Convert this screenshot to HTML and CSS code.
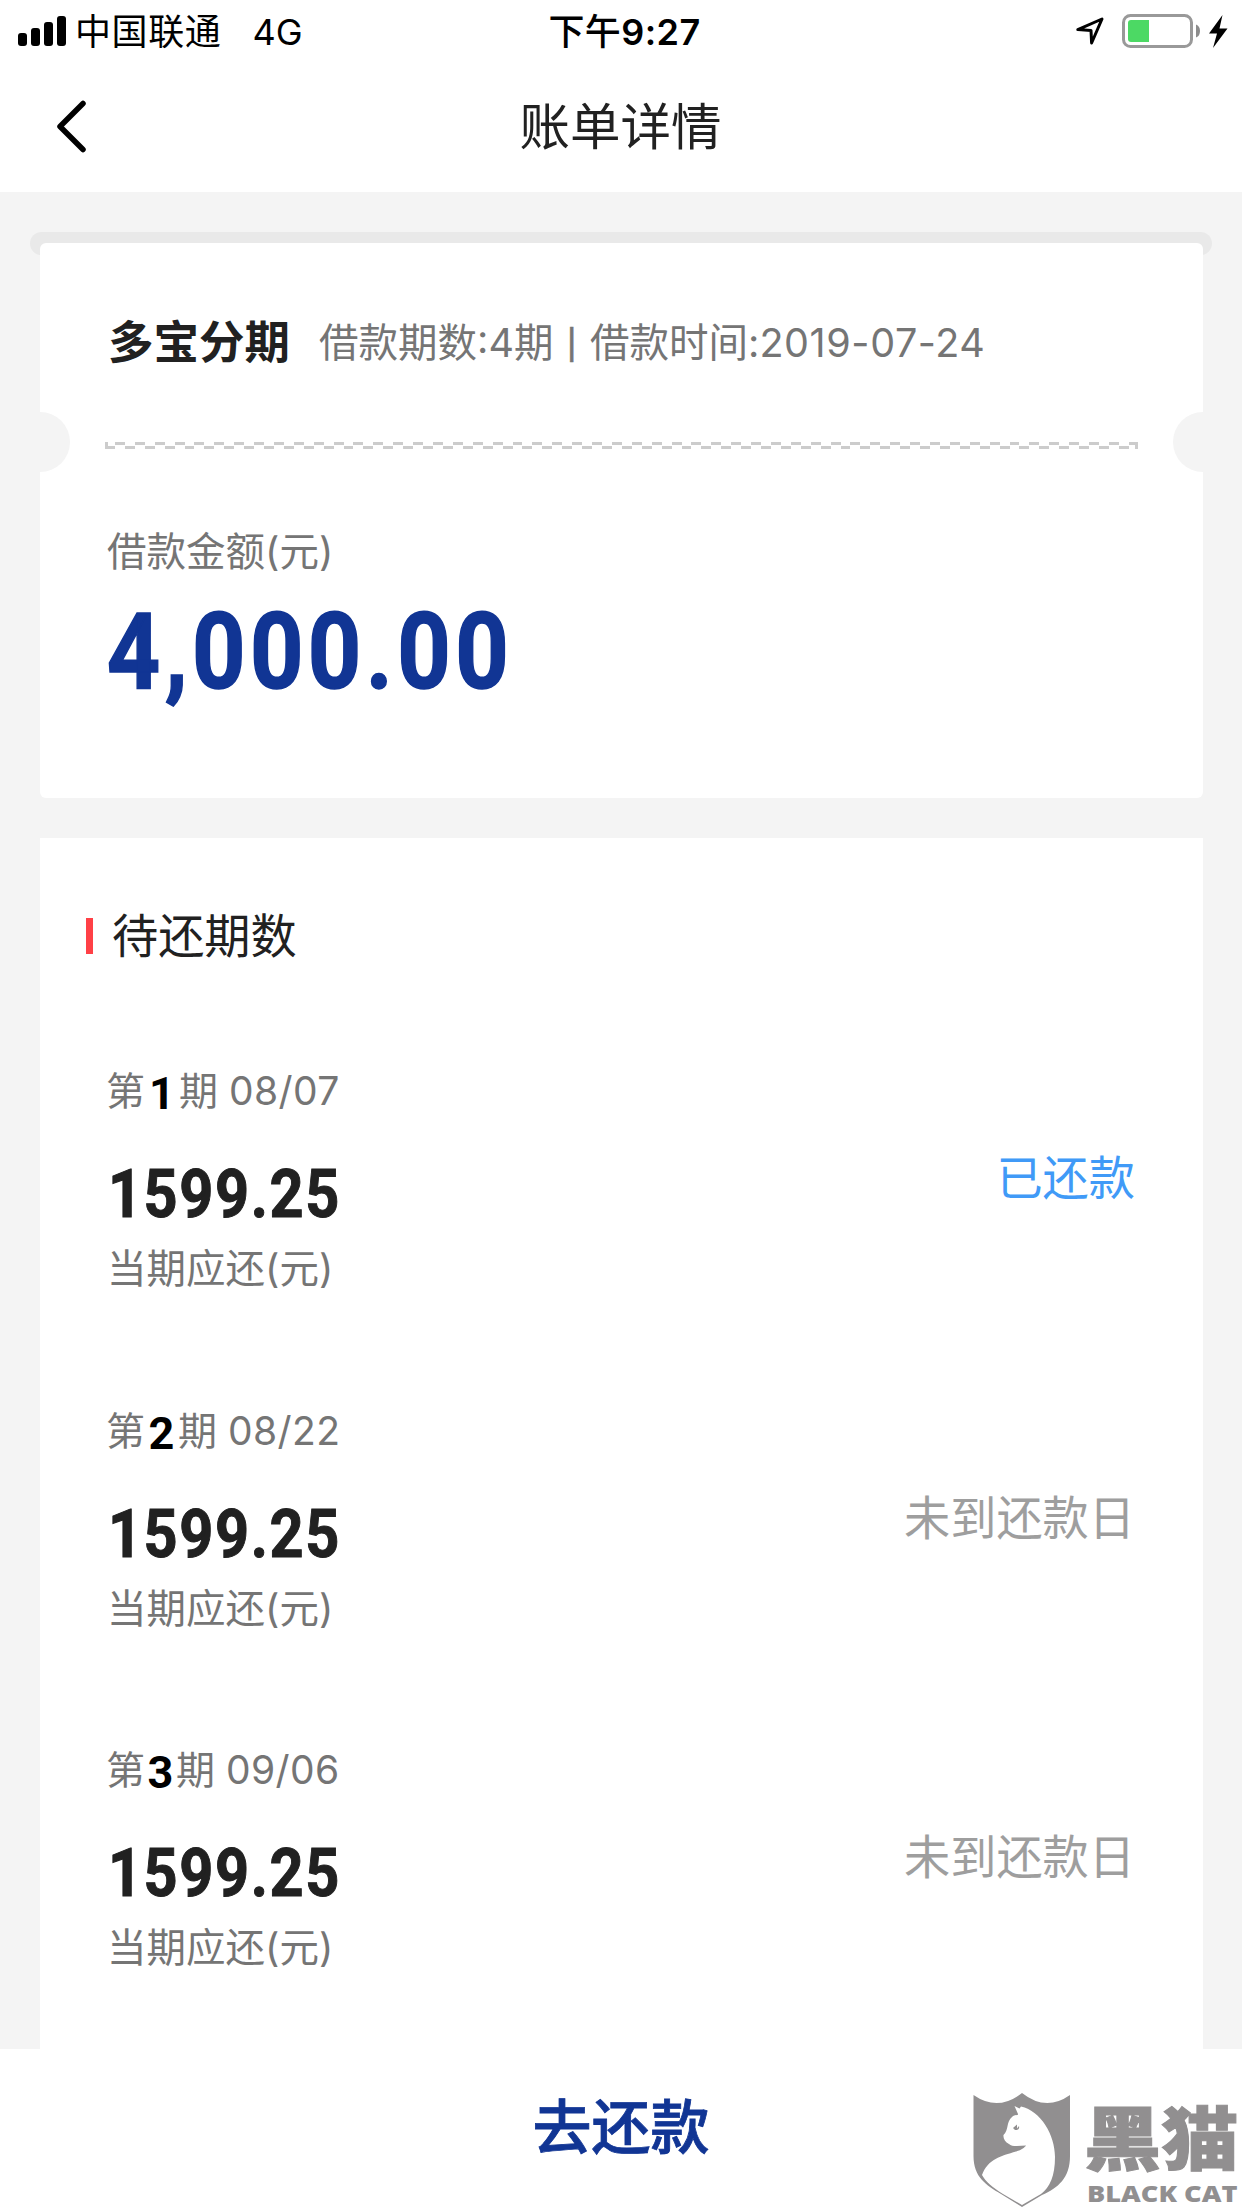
FILE: index.html
```
<!DOCTYPE html>
<html lang="zh-CN">
<head>
    <meta charset="UTF-8">
    <meta name="viewport" content="width=device-width, initial-scale=1.0">
    <title>账单详情</title>
    <link rel="stylesheet" href="styles.css">
</head>
<body>
    <div class="status-bar">
        <div class="status-left">
            <svg class="signal" width="48" height="30" viewBox="0 0 48 30">
                <rect x="0" y="17" width="9" height="13" rx="3"/>
                <rect x="13" y="12" width="9" height="18" rx="3"/>
                <rect x="26" y="6" width="9" height="24" rx="3"/>
                <rect x="39" y="0" width="9" height="30" rx="3"/>
            </svg>
            <span class="carrier">中国联通</span>
            <span class="network">4G</span>
        </div>
        <div class="clock">下午<span class="clock-num">9:27</span></div>
        <div class="status-right">
            <svg class="location" width="28" height="28" viewBox="0 0 28 28">
                <path d="M1.8 12.6 L26 2 L15.6 26 L15 13.4 Z" fill="none" stroke="#000" stroke-width="3" stroke-linejoin="round"/>
            </svg>
            <svg class="battery" width="79" height="34" viewBox="0 0 79 34">
                <rect x="1.5" y="1.5" width="68" height="31" rx="7" fill="none" stroke="#999" stroke-width="3"/>
                <path d="M9 6 H27 V28 H9 A3 3 0 0 1 6 25 V9 A3 3 0 0 1 9 6 Z" fill="#4cd964"/>
                <path d="M74 10.500 Q78 12 78 17 Q78 22 74 23.500 Z" fill="#8c8c8c"/>
            </svg>
            <svg class="bolt" width="19" height="33" viewBox="0 0 19 33">
                <path d="M13.500 0 L0 18.500 H8 L4 33 L18.500 13.500 H10.500 Z"/>
            </svg>
        </div>
    </div>

    <header class="nav">
        <svg class="back" width="32" height="54" viewBox="0 0 32 54">
            <path d="M27 4.500 L4 27.500 L27 50.500" fill="none" stroke="#000" stroke-width="5.500" stroke-linecap="round" stroke-linejoin="round"/>
        </svg>
        <h1>账单详情</h1>
    </header>

    <main class="content">
        <div class="slot"></div>
        <section class="card ticket">
            <div class="loan-head">
                <span class="loan-name">多宝分期</span>
                <span class="loan-info">借款期数:4期 <i>|</i> 借款时间:<span class="loan-date">2019-07-24</span></span>
            </div>
            <div class="divider"></div>
            <p class="loan-label">借款金额(元)</p>
            <p class="loan-amount">4,000.00</p>
        </section>

        <section class="card bills">
            <h2>待还期数</h2>
            <div class="bill">
                <div class="bill-main">
                    <p class="bill-period">第<b class="n1">1</b>期 <span>08/07</span></p>
                    <p class="bill-amount">1599.25</p>
                    <p class="bill-label">当期应还(元)</p>
                </div>
                <div class="bill-status paid">已还款</div>
            </div>
            <div class="bill">
                <div class="bill-main">
                    <p class="bill-period">第<b class="n2">2</b>期 <span>08/22</span></p>
                    <p class="bill-amount">1599.25</p>
                    <p class="bill-label">当期应还(元)</p>
                </div>
                <div class="bill-status">未到还款日</div>
            </div>
            <div class="bill">
                <div class="bill-main">
                    <p class="bill-period">第<b class="n3">3</b>期 <span>09/06</span></p>
                    <p class="bill-amount">1599.25</p>
                    <p class="bill-label">当期应还(元)</p>
                </div>
                <div class="bill-status">未到还款日</div>
            </div>
        </section>
    </main>

    <footer class="pay-bar">
        <a class="pay">去还款</a>
        <div class="watermark">
            <svg class="shield" width="104" height="118" viewBox="0 0 104 118">
                <path class="ink" d="M3.500 5 Q28 22 52 3 Q76 22 100 5 V66 C100 88 88 98 72 105 L52 117 L31 104 C16 95 3.500 87 3.500 66 Z"/>
                <path class="cat" d="M44.500 16 L49.500 18.500 L51 16.500 C71 21 85 45 85 67 C85 86 80 97 71 104 L52 115 L33 104 C22 97 16 92 12 85 C18 69 31 66 46 61.500 C52 60 55 57 56 55.500 C49 56 42 57 39 54 C35 52 33 48 33.500 45 C39 40 36 32 42 27 C45 24 48 26 48 24 Z"/>
                <path class="ink" d="M43 38 L47 34.500 V38.500 L49 36 Q50 40 45 40 Z"/>
            </svg>
            <div class="mark">
                <div class="mark-cn">黑猫</div>
                <div class="mark-en">BLACK CAT</div>
            </div>
        </div>
    </footer>
</body>
</html>
```
FILE: styles.css
```
* {
    box-sizing: border-box;
}

body {
    display: flex;
    flex-direction: column;
    width: 1242px;
    height: 2208px;
    margin: 0;
    overflow: hidden;
    font-family: Inter, "Noto Sans CJK SC", sans-serif;
    background-color: #f4f4f4;
    color: #212121;
}

h1, h2, p {
    margin: 0;
    font-weight: 400;
}

/* status bar */
.status-bar {
    display: grid;
    grid-template-columns: 1fr auto 1fr;
    align-items: center;
    height: 60px;
    padding: 0 14px 0 18px;
    background: #fff;
    color: #000;
    font-size: 36px;
    line-height: 60px;
}

.status-left,
.status-right {
    display: flex;
    align-items: center;
}

.status-right {
    justify-content: flex-end;
}

.carrier {
    margin-left: 9px;
    padding-top: 2px;
    letter-spacing: 0.6px;
}

.network {
    margin-left: 31px;
    padding-top: 1px;
}

.clock {
    padding: 2px 0 0 3px;
    font-weight: 500;
    letter-spacing: 0.4px;
}

.clock-num {
    font-weight: 600;
}

.battery {
    margin-left: 18px;
}

.bolt {
    margin-left: 8px;
}

/* title bar */
.nav {
    display: grid;
    grid-template-columns: 1fr auto 1fr;
    align-items: center;
    height: 132px;
    padding: 0 56px;
    background: #fff;
}

.nav h1 {
    padding: 2px 1px 0 0;
    font-size: 50.5px;
    line-height: 130px;
}

/* cards */
.content {
    flex: 1;
    padding: 40px 39px 0 40px;
    overflow: hidden;
}

.slot {
    height: 23px;
    margin: 0 -9px 0 -10px;
    border-radius: 12px;
    background: #e9e9e9;
}

.card {
    background: #fff;
}

.ticket {
    position: relative;
    height: 555px;
    margin-top: -12px;
    padding: 66px 65px 0;
    border-radius: 6px;
}

.ticket::before,
.ticket::after {
    content: "";
    position: absolute;
    top: 169px;
    width: 30px;
    height: 60px;
    background: #f4f4f4;
}

.ticket::before {
    left: 0;
    border-radius: 0 30px 30px 0;
}

.ticket::after {
    right: 0;
    border-radius: 30px 0 0 30px;
}

.loan-head {
    display: flex;
    align-items: center;
    height: 60px;
    padding-left: 3px;
    white-space: nowrap;
}

.loan-name {
    font-size: 45.5px;
    font-weight: 700;
}

.loan-info {
    margin-left: 29px;
    font-size: 39.5px;
    color: #757575;
}

.loan-info i {
    margin: 0 2.5px;
    font-family: "Liberation Sans", sans-serif;
    font-size: 36px;
    font-style: normal;
    vertical-align: 3px;
    -webkit-text-stroke: 0.5px #757575;
}

.loan-date {
    letter-spacing: 0.6px;
}

.divider {
    height: 7px;
    margin-top: 73px;
    background:
        linear-gradient(#ccc, #ccc) 0 0 / 3px 100% no-repeat,
        linear-gradient(#ccc, #ccc) 100% 0 / 3px 100% no-repeat,
        repeating-linear-gradient(90deg, transparent 0 9.94px, #ccc 9.94px 19.88px) 0 0 / 100% 3px no-repeat,
        repeating-linear-gradient(90deg, #ccc 0 9.94px, transparent 9.94px 19.88px) 0 100% / 100% 3px no-repeat;
}

.loan-label {
    margin-top: 78px;
    padding-left: 2px;
    font-size: 39.5px;
    line-height: 50px;
    color: #757575;
}

/* narrow figures, close to DIN */
.loan-amount,
.bill-amount {
    width: max-content;
    font-family: Roboto, sans-serif;
    font-weight: 700;
    transform-origin: 0 50%;
}

.loan-amount {
    margin-top: 20px;
    padding-left: 2px;
    font-size: 106px;
    line-height: 110px;
    letter-spacing: 5px;
    color: #113594;
    transform: scaleX(0.88);
    -webkit-text-stroke: 1.5px #113594;
}

/* instalments */
.bills {
    height: 1300px;
    margin-top: 40px;
    padding: 68px 68px 0 67px;
}

.bills h2 {
    display: flex;
    align-items: center;
    margin-left: -21px;
    font-size: 46.2px;
    line-height: 60px;
}

.bills h2::before {
    content: "";
    width: 7px;
    height: 36px;
    margin-right: 19px;
    background: #ff4046;
}

.bill {
    display: flex;
    justify-content: space-between;
    height: 339.5px;
}

.bills h2 + .bill {
    margin-top: 100px;
}

.bill-period {
    margin-left: -1px;
    font-size: 39px;
    line-height: 50px;
    color: #757575;
    white-space: nowrap;
}

.bill-period b {
    display: inline-block;
    font-family: Roboto, sans-serif;
    font-size: 45px;
    line-height: 40px;
    text-align: center;
    vertical-align: -4px;
    color: #000;
}

.n1 {
    width: 34px;
}

.n2 {
    width: 33px;
}

.n3 {
    width: 31px;
}

.bill-period span {
    letter-spacing: 0.4px;
}

.bill-amount {
    margin-top: 44px;
    padding-left: 1px;
    font-size: 66px;
    line-height: 70px;
    letter-spacing: 1.8px;
    transform: scaleX(0.9);
    -webkit-text-stroke: 1px #212121;
}

.bill-label {
    margin-top: 14px;
    font-size: 39.5px;
    line-height: 50px;
    color: #757575;
}

.bill-status {
    margin-top: 87px;
    font-size: 46.2px;
    line-height: 50px;
    color: #9e9e9e;
}

.paid {
    color: #409af7;
}

/* bottom bar */
.pay-bar {
    position: relative;
    height: 159px;
    background: #fff;
    text-align: center;
}

.pay {
    font-size: 59px;
    font-weight: 500;
    line-height: 158px;
    color: #113594;
    -webkit-text-stroke: 0.8px #113594;
}

.watermark {
    position: absolute;
    right: 0;
    bottom: 0;
    display: flex;
    width: 272px;
    height: 118px;
}

.shield {
    flex: none;
}

.ink {
    fill: #918f90;
}

.cat {
    fill: #fff;
}

.mark {
    width: 156px;
    margin-left: 10px;
    padding-top: 10px;
    text-align: left;
    color: #918f90;
    white-space: nowrap;
}

.mark-cn {
    width: 138px;
    font-family: "Noto Sans CJK SC", sans-serif;
    font-size: 69px;
    font-weight: 900;
    line-height: 70px;
    transform: scaleX(1.12);
    transform-origin: 0 50%;
    -webkit-text-stroke: 1px #918f90;
}

.mark-en {
    width: max-content;
    margin: 10px 0 0 3px;
    font-family: "Open Sans", sans-serif;
    font-size: 23px;
    font-weight: 800;
    line-height: 26px;
    transform: scaleX(1.18);
    transform-origin: 0 50%;
}
```
